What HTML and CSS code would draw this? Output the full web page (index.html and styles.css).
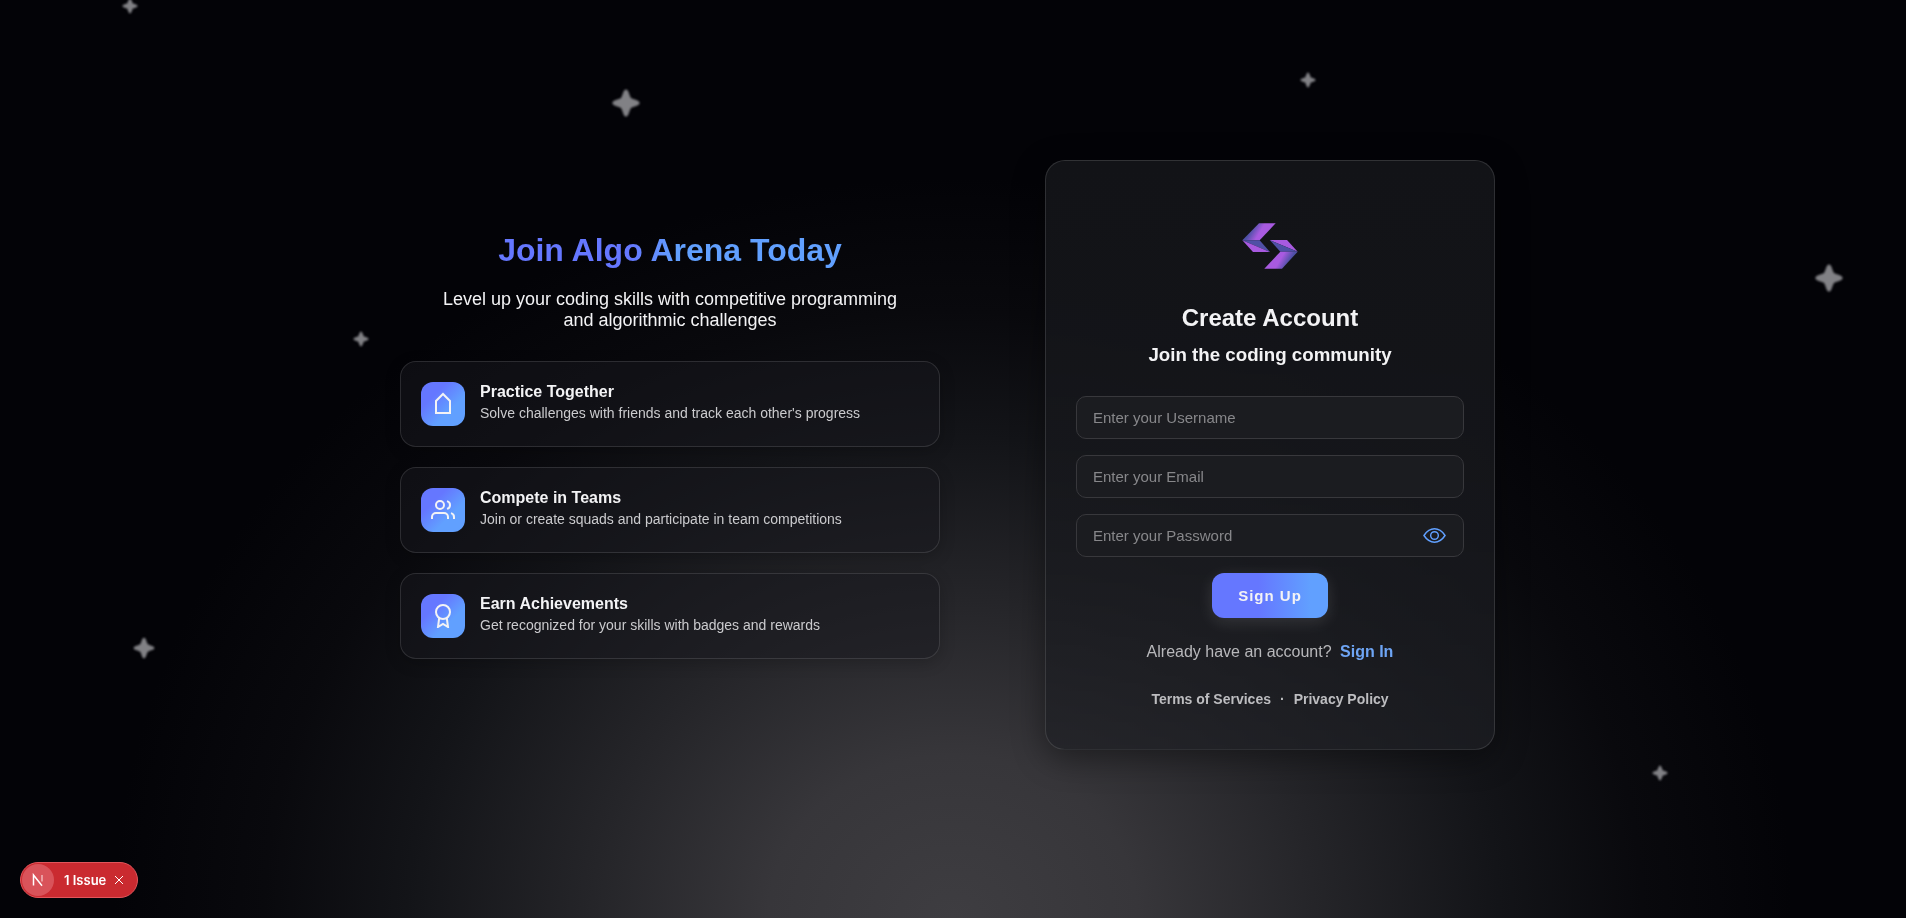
FILE: index.html
```html
<!DOCTYPE html>
<html lang="en">
<head>
    <meta charset="UTF-8">
    <meta name="viewport" content="width=device-width, initial-scale=1.0">
    <title>Algo Arena - Sign Up</title>
    <link rel="stylesheet" href="styles.css">
</head>
<body>
    <svg class="defs" aria-hidden="true">
        <symbol id="star" viewBox="0 0 32 32">
            <path d="M16 1C19 1 19 6 21.500 10.500C26 13 31 13 31 16C31 19 26 19 21.500 21.500C19 26 19 31 16 31C13 31 13 26 10.500 21.500C6 19 1 19 1 16C1 13 6 13 10.500 10.500C13 6 13 1 16 1Z"/>
        </symbol>
    </svg>

    <div class="stars" aria-hidden="true">
        <svg class="star star-1"><use href="#star"/></svg>
        <svg class="star star-2 large"><use href="#star"/></svg>
        <svg class="star star-3"><use href="#star"/></svg>
        <svg class="star star-4 large"><use href="#star"/></svg>
        <svg class="star star-5"><use href="#star"/></svg>
        <svg class="star star-6 medium"><use href="#star"/></svg>
        <svg class="star star-7"><use href="#star"/></svg>
    </div>

    <main class="page">
        <div class="container">
            <section class="intro">
                <h1>Join Algo Arena Today</h1>
                <p class="lead">Level up your coding skills with competitive programming and algorithmic challenges</p>

                <div class="feature">
                    <div class="feature-icon">
                        <svg viewBox="0 0 24 24"><path d="M5 21V9l7-7 7 7v12z"/></svg>
                    </div>
                    <div class="feature-text">
                        <h2>Practice Together</h2>
                        <p>Solve challenges with friends and track each other's progress</p>
                    </div>
                </div>

                <div class="feature">
                    <div class="feature-icon">
                        <svg viewBox="0 0 24 24">
                            <path d="M17 21v-2a4 4 0 0 0-4-4H5a4 4 0 0 0-4 4v2"/>
                            <circle cx="9" cy="7" r="4"/>
                            <path d="M23 21v-2a4 4 0 0 0-3-3.87"/>
                            <path d="M16 3.13a4 4 0 0 1 0 7.75"/>
                        </svg>
                    </div>
                    <div class="feature-text">
                        <h2>Compete in Teams</h2>
                        <p>Join or create squads and participate in team competitions</p>
                    </div>
                </div>

                <div class="feature">
                    <div class="feature-icon">
                        <svg viewBox="0 0 24 24">
                            <circle cx="12" cy="8" r="7"/>
                            <path d="M8.21 13.89L7 23l5-3 5 3-1.21-9.12"/>
                        </svg>
                    </div>
                    <div class="feature-text">
                        <h2>Earn Achievements</h2>
                        <p>Get recognized for your skills with badges and rewards</p>
                    </div>
                </div>
            </section>

            <section class="card">
                <svg class="logo" viewBox="0 0 300 300" role="img" aria-label="Algo Arena logo">
                    <defs>
                        <linearGradient id="arm-left" gradientUnits="userSpaceOnUse" x1="92" y1="105" x2="114" y2="118">
                            <stop offset="0" stop-color="#4f50a6"/>
                            <stop offset="1" stop-color="#a85ae0"/>
                        </linearGradient>
                        <linearGradient id="arm-right" gradientUnits="userSpaceOnUse" x1="208" y1="195" x2="186" y2="182">
                            <stop offset="0" stop-color="#4f50a6"/>
                            <stop offset="1" stop-color="#a85ae0"/>
                        </linearGradient>
                    </defs>
                    <path fill="url(#arm-left)" d="M117 82h50l-48 51H67z"/>
                    <path fill="#4f50a6" d="M67 133h52l31 35z"/>
                    <path fill="#a85ae0" d="M67 133l83 35H99z"/>
                    <path fill="#a85ae0" d="M149 132h52l32 35z"/>
                    <path fill="#4f50a6" d="M149 132l84 35h-52z"/>
                    <path fill="url(#arm-right)" d="M181 167h52l-47 51h-53z"/>
                </svg>

                <h2>Create Account</h2>
                <h3>Join the coding community</h3>

                <form class="form">
                    <input type="text" placeholder="Enter your Username" aria-label="Username">
                    <input type="email" placeholder="Enter your Email" aria-label="Email">
                    <div class="password">
                        <input type="password" placeholder="Enter your Password" aria-label="Password">
                        <button type="button" class="toggle" aria-label="Show password">
                            <svg viewBox="0 0 24 24">
                                <path d="M1 12C4 7.500 7.500 5 12 5s8 2.500 11 7c-3 4.500-6.500 7-11 7s-8-2.500-11-7z"/>
                                <circle cx="12" cy="12" r="4"/>
                            </svg>
                        </button>
                    </div>
                    <button type="submit" class="submit">Sign Up</button>
                </form>

                <p class="signin">Already have an account? <a href="#">Sign In</a></p>
                <p class="legal"><a href="#">Terms of Services</a><span>·</span><a href="#">Privacy Policy</a></p>
            </section>
        </div>
    </main>

    <div class="issue">
        <button type="button" class="issue-logo" aria-label="Open dev tools">
            <svg viewBox="0 0 14 14">
                <path d="M2.500 12.500V2L11 12.800"/>
                <path class="faded" d="M11 2v6.500"/>
            </svg>
        </button>
        <button type="button" class="issue-label">1 Issue</button>
        <button type="button" class="issue-close" aria-label="Close">
            <svg viewBox="0 0 10 10"><path d="M1 1l8 8M9 1l-8 8"/></svg>
        </button>
    </div>
</body>
</html>
```

FILE: styles.css
```css
:root {
    --indigo: #6577ff;
    --blue: #61a0ff;
    --text: #f3f3f5;
    --border: rgba(255, 255, 255, 0.12);
}

* {
    margin: 0;
    padding: 0;
    box-sizing: border-box;
}

body {
    font-family: 'Liberation Sans', Arial, sans-serif;
    color: var(--text);
    background: radial-gradient(840px 740px at 50% 100%, #3e3d41 0%, #37363a 22%, #252529 43%, #131418 65%, #09090d 82%, #030307 100%);
    min-height: 100vh;
    overflow: hidden;
}

button {
    font-family: inherit;
    border: none;
    background: none;
    color: inherit;
    cursor: pointer;
}

a {
    color: inherit;
    text-decoration: none;
}

.defs {
    position: absolute;
    width: 0;
    height: 0;
}

/* Stars */
.stars {
    position: fixed;
    inset: 0;
    overflow: hidden;
}

.star {
    position: absolute;
    width: 16px;
    height: 16px;
    transform: translate(-50%, -50%);
    fill: #818185;
    filter: blur(1px);
    overflow: visible;
}

.star.medium {
    width: 22px;
    height: 22px;
}

.star.large {
    width: 29px;
    height: 29px;
}

.star-1 { left: 130px; top: 6px; }
.star-2 { left: 626px; top: 103px; }
.star-3 { left: 1308px; top: 80px; }
.star-4 { left: 1829px; top: 278px; }
.star-5 { left: 361px; top: 339px; }
.star-6 { left: 144px; top: 648px; }
.star-7 { left: 1660px; top: 773px; }

.page {
    position: relative;
    min-height: 100vh;
    padding-bottom: 8px;
    display: flex;
    align-items: center;
    justify-content: center;
}

.container {
    width: 100%;
    max-width: 1200px;
    padding: 0 58px 0 47px;
    display: grid;
    grid-template-columns: minmax(0, 540px) minmax(0, 450px);
    justify-content: space-between;
    align-items: center;
}

/* Left column */
.intro h1 {
    width: fit-content;
    margin: 0 auto 20px;
    font-size: 32px;
    line-height: 37px;
    background: linear-gradient(90deg, var(--indigo) 38%, var(--blue) 52%);
    -webkit-background-clip: text;
    background-clip: text;
    color: transparent;
}

.lead {
    max-width: 480px;
    margin: 0 auto 30px;
    font-size: 18px;
    line-height: 21px;
    text-align: center;
}

.feature {
    display: flex;
    gap: 15px;
    padding: 20px;
    margin-bottom: 20px;
    background: rgba(24, 24, 29, 0.5);
    border: 1px solid var(--border);
    border-radius: 16px;
    box-shadow: 0 4px 16px rgba(0, 0, 0, 0.2);
}

.feature-icon {
    flex: none;
    width: 44px;
    height: 44px;
    border-radius: 12px;
    background: linear-gradient(135deg, var(--indigo) 30%, var(--blue) 65%);
    display: flex;
    align-items: center;
    justify-content: center;
}

.feature-icon svg {
    width: 24px;
    height: 24px;
    fill: none;
    stroke: var(--text);
    stroke-width: 2;
}

.feature-text h2 {
    font-size: 16px;
    line-height: 19px;
    margin-bottom: 4px;
}

.feature-text p {
    font-size: 14px;
    line-height: 16px;
    color: #cbcbce;
}

/* Sign up card */
.card {
    display: flex;
    flex-direction: column;
    align-items: center;
    padding: 35px 30px 42px;
    background: linear-gradient(180deg, #121317 0%, rgba(30, 31, 36, 0.7) 100%);
    border: 1px solid var(--border);
    border-radius: 20px;
    box-shadow: 0 8px 32px rgba(0, 0, 0, 0.4);
}

.logo {
    width: 100px;
    height: 100px;
    margin-bottom: 8px;
}

.card h2 {
    font-size: 24px;
    line-height: 28px;
    margin-bottom: 12px;
}

.card h3 {
    line-height: 22px;
    margin-bottom: 30px;
}

.form {
    width: 100%;
    display: flex;
    flex-direction: column;
    align-items: center;
    gap: 16px;
}

.form input {
    display: block;
    width: 100%;
    height: 43px;
    padding: 0 16px;
    font-family: inherit;
    font-size: 15px;
    color: var(--text);
    background: #1b1c20;
    border: 1px solid #38383c;
    border-radius: 10px;
    outline: none;
}

.form input::placeholder {
    color: #87878a;
}

.password {
    position: relative;
    width: 100%;
}

.toggle {
    position: absolute;
    top: 0;
    right: 18px;
    height: 100%;
    display: flex;
    align-items: center;
}

.toggle svg {
    width: 23px;
    height: 23px;
    fill: none;
    stroke: var(--blue);
    stroke-width: 1.5;
}

.submit {
    height: 45px;
    padding: 0 26px;
    font-size: 15px;
    font-weight: bold;
    letter-spacing: 1px;
    border-radius: 12px;
    background: linear-gradient(90deg, var(--indigo) 40%, var(--blue) 85%);
    box-shadow: 0 4px 16px rgba(255, 255, 255, 0.12);
}

.signin {
    margin-top: 25px;
    font-size: 16px;
    line-height: 18px;
    color: #b8b8bb;
}

.signin a {
    margin-left: 4px;
    font-weight: bold;
    color: #6ea5f5;
}

.legal {
    display: flex;
    gap: 9px;
    margin-top: 30px;
    font-size: 14px;
    line-height: 16px;
    font-weight: bold;
    color: #bdbdc0;
}

/* Dev tools badge */
.issue {
    position: fixed;
    left: 20px;
    bottom: 20px;
    height: 36px;
    display: flex;
    align-items: center;
    padding: 1px;
    background: #ca2a30;
    border: 1px solid #e2555b;
    border-radius: 18px;
    font-family: Inter, sans-serif;
}

.issue-logo {
    width: 32px;
    height: 32px;
    border-radius: 50%;
    background: #d9535a;
    display: flex;
    align-items: center;
    justify-content: center;
}

.issue-logo svg {
    width: 14px;
    height: 14px;
    fill: none;
    stroke: #fff;
    stroke-width: 1.5;
}

.issue-logo .faded {
    stroke: #f0b5b8;
}

.issue-label {
    padding: 0 8px 0 10px;
    font-size: 13px;
    font-weight: 600;
    color: #fff;
}

.issue-close {
    padding-right: 12px;
    display: flex;
}

.issue-close svg {
    width: 10px;
    height: 10px;
    stroke: #fff;
    stroke-width: 1;
}

@media (max-width: 1000px) {
    body {
        overflow: auto;
    }

    .container {
        grid-template-columns: 1fr;
        gap: 40px;
        padding: 20px;
    }
}
```
